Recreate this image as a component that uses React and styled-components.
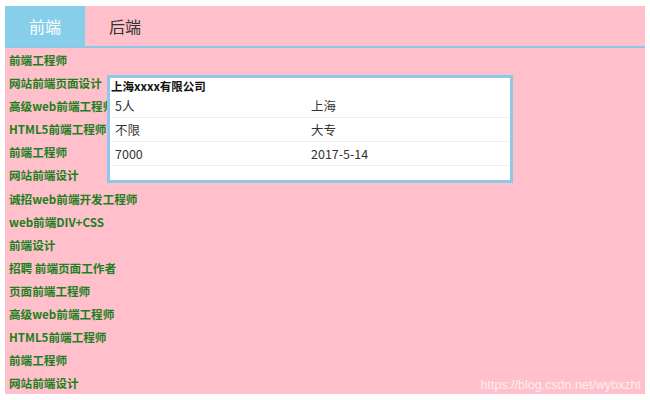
import React from 'react'
import styled, { createGlobalStyle } from 'styled-components'

const Global = createGlobalStyle`
body {
    margin: 0;
    background: #fff;
    font-family: "Noto Sans CJK SC", "Noto Sans", sans-serif;
}
`

const Wrap = styled.div`
position: relative;
width: 640px;
height: 388px;
margin: 6px 5px;
background-color: pink;
overflow: hidden;
`

const TabBar = styled.div`
display: flex;
height: 40px;
border-bottom: 2px solid #8ec8e8;
`

const Tab = styled.div`
width: 80px;
display: flex;
align-items: center;
justify-content: center;
font-size: 16px;
color: ${props => props.active ? '#fff' : '#333'};
background-color: ${props => props.active ? '#87ceeb' : 'transparent'};
`

const List = styled.ul`
list-style: none;
margin: 0;
padding: 1px 0 0 4px;
`

const Item = styled.li`
height: 23.1px;
line-height: 23px;
font-size: 11.6px;
font-weight: bold;
color: #1d7f1d;
white-space: nowrap;
`

const Card = styled.div`
position: absolute;
left: 102px;
top: 69px;
width: 400px;
height: 102px;
background: #fff;
border: 3px solid #8ec8e8;
`

const Title = styled.div`
font-size: 11.5px;
font-weight: bold;
color: #111;
line-height: 16px;
padding-left: 1px;
`

const Row = styled.div`
display: grid;
grid-template-columns: 196px 194px;
height: 23px;
line-height: 23px;
margin-left: 1px;
border-bottom: 1px solid #eee;
font-size: 12.5px;
color: #333;
`

const Cell = styled.span`
padding-left: 4px;
`

const Mark = styled.div`
position: absolute;
right: 4px;
bottom: 2px;
font-family: "Liberation Sans", Arial, sans-serif;
font-size: 12.5px;
color: rgba(255,255,255,0.75);
`

const jobs = ['前端工程师','网站前端页面设计','高级web前端工程师','HTML5前端工程师','前端工程师','网站前端设计','诚招web前端开发工程师','web前端DIV+CSS','前端设计','招聘 前端页面工作者','页面前端工程师','高级web前端工程师','HTML5前端工程师','前端工程师','网站前端设计']

const info = [['5人','上海'],['不限','大专'],['7000','2017-5-14']]

const App = () => {
    return (
        <Wrap>
            <Global />
            <TabBar>
                <Tab active>前端</Tab>
                <Tab>后端</Tab>
            </TabBar>
            <List>
                {jobs.map((j, i) => <Item key={i}>{j}</Item>)}
            </List>
            <Card>
                <Title>上海xxxx有限公司</Title>
                {info.map((r, i) => (
                    <Row key={i}>
                        <Cell>{r[0]}</Cell>
                        <Cell>{r[1]}</Cell>
                    </Row>
                ))}
            </Card>
            <Mark>https://blog.csdn.net/wybxzht</Mark>
        </Wrap>
    )
}

export default App
